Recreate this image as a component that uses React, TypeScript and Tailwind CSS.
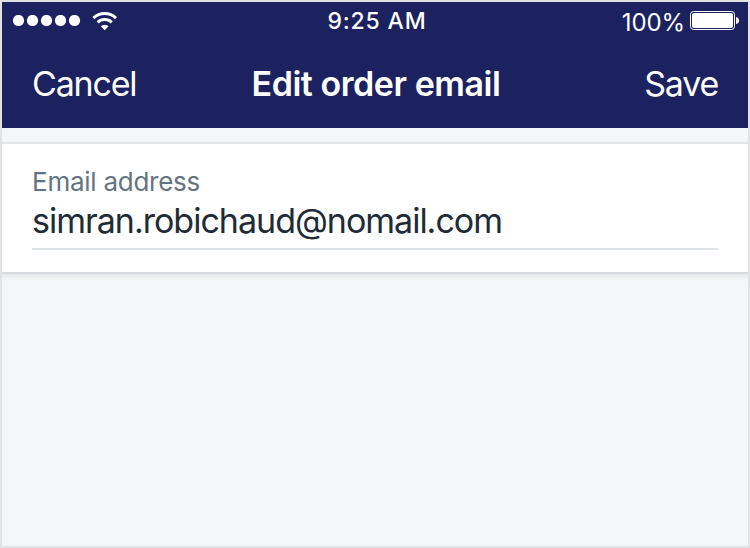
import React from "react";

function StatusBar() {
  return (
    <div className="grid h-[38px] grid-cols-[1fr_auto_1fr] items-center pl-[10px] pr-[9px]">
      <div className="flex items-center">
        <svg width="69" height="12" viewBox="0 0 69 12" fill="white">
          {[6.5, 20.5, 34.5, 48.5, 62.5].map((x) => (
            <circle key={x} cx={x} cy="5.5" r="5.6" />
          ))}
        </svg>
        <svg className="ml-[11px]" width="26" height="20" viewBox="0 0 26 20" fill="none" stroke="white" strokeWidth="2.9">
          <path d="M1.4 7.1a16.2 16.2 0 0 1 22.600 0M5.600 11.400a10.200 10.200 0 0 1 14.200 0" />
          <path d="M12.700 19.200l-3.900-3.900a5.500 5.500 0 0 1 7.800 0z" fill="white" stroke="none" />
        </svg>
      </div>
      <span className="pl-[3px] text-[23px] font-medium leading-[28px] tracking-[0.85px]">9:25 AM</span>
      <div className="flex items-center justify-end">
        <span className="pt-1 text-[24px] leading-[28px] tracking-[-0.1px]">100%</span>
        <svg className="mb-px ml-[5px]" width="49" height="19" viewBox="0 0 49 19">
          <rect x="0.5" y="0.5" width="44" height="18" rx="3" fill="none" stroke="white" />
          <rect x="2" y="2" width="41" height="15" rx="2" fill="white" />
          <path d="M46 6q3 .5 3 3.500t-3 3.500z" fill="white" />
        </svg>
      </div>
    </div>
  );
}

export default function App() {
  return (
    <div className="h-[548px] w-[750px] overflow-hidden border-2 border-[#e1e2e3] bg-[#f4f6f8] font-['Inter',sans-serif]">
      <header className="h-[126px] bg-[#1c2260] text-white">
        <StatusBar />
        <div className="grid h-[88px] grid-cols-[1fr_auto_1fr] items-center px-[30px] pb-px text-[34px]">
          <span className="tracking-[-1.2px]">Cancel</span>
          <h1 className="pl-[2px] font-semibold tracking-[-0.45px]">Edit order email</h1>
          <span className="text-right tracking-[-1.2px]">Save</span>
        </div>
      </header>
      <main className="mt-[14px] h-[130px] border-t-2 border-[#e3e5e8] bg-white px-[30px] pt-[22px] shadow-[0_2px_0_#d7dade,0_3px_5px_1px_#dfe3e8]">
        <label className="block text-[26px] leading-8 tracking-[-0.25px] text-[#637381]">Email address</label>
        <div className="h-[52px] border-b-2 border-[#dfe3e8] text-[34px] leading-[46px] tracking-[-1px] text-[#212b36]">simran.robichaud@nomail.com</div>
      </main>
    </div>
  );
}
